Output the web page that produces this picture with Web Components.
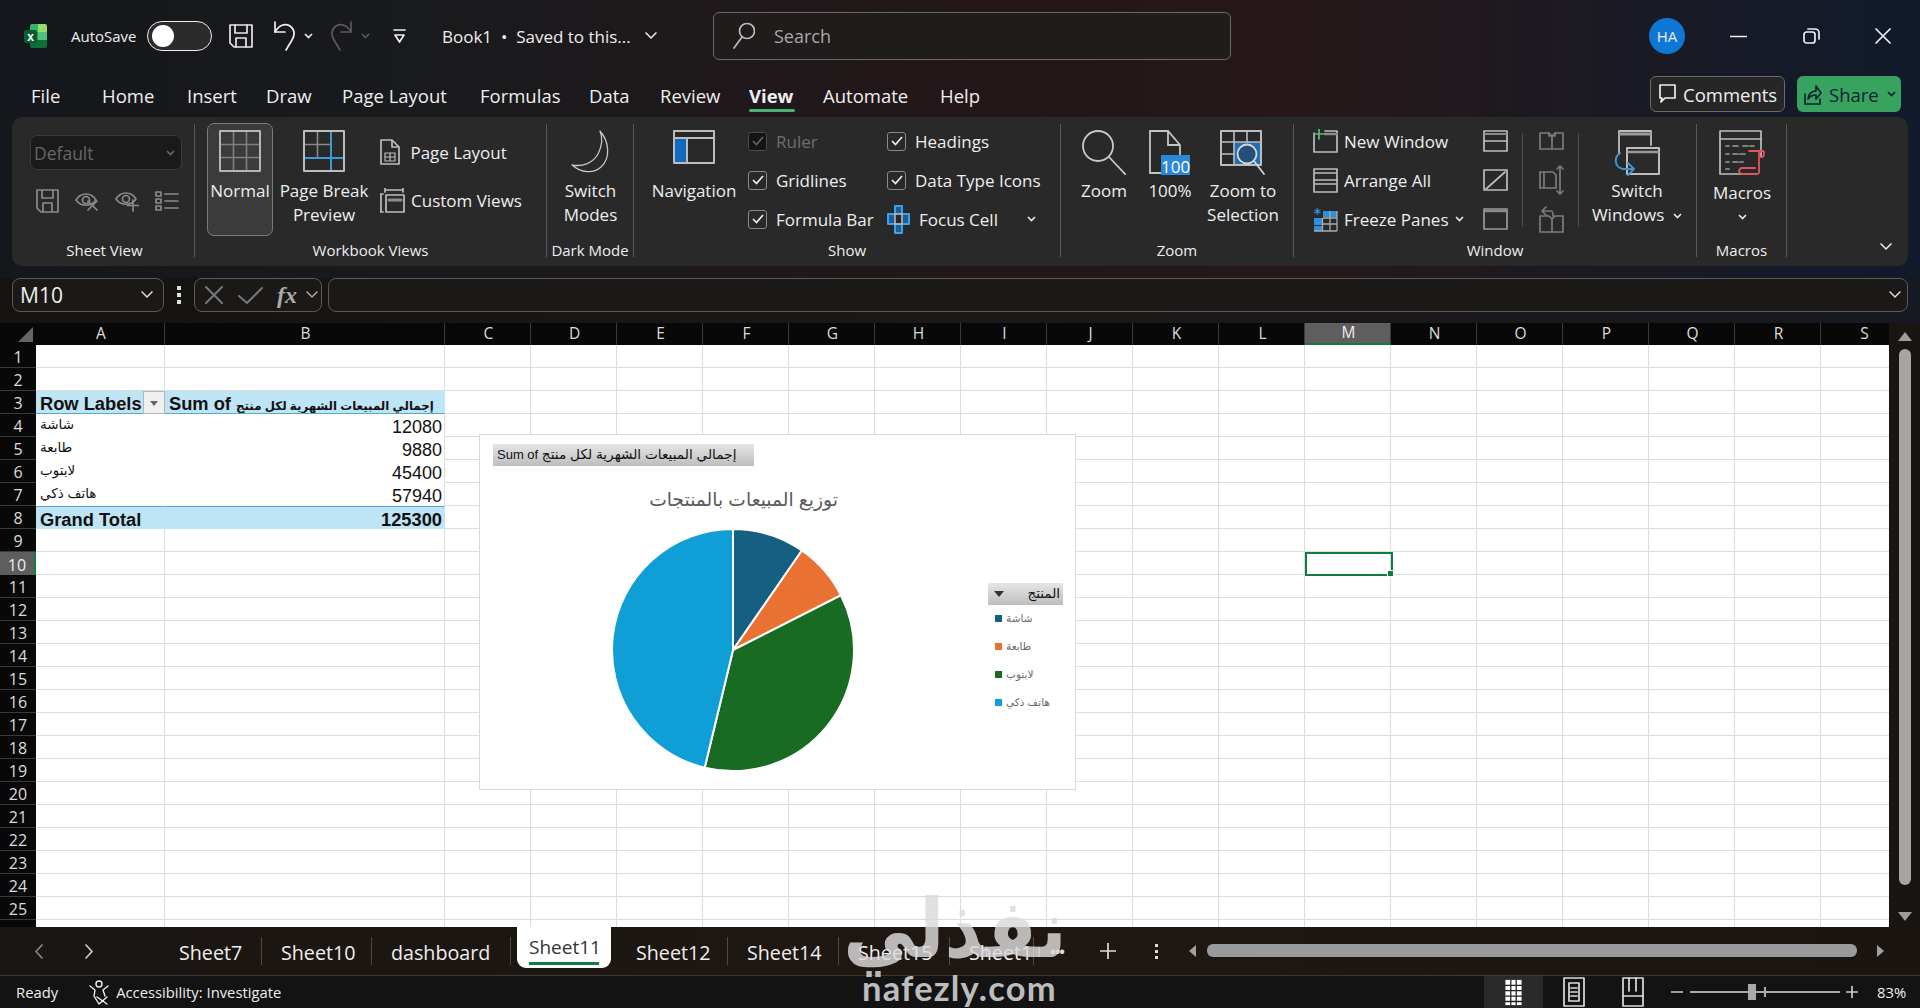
<!DOCTYPE html>
<html lang="en"><head><meta charset="utf-8"><title>Book1 - Excel</title>
<style>
html,body{margin:0;padding:0;width:1920px;height:1008px;overflow:hidden;background:#151515}
body{position:relative;display:flex;flex-direction:column;font-family:"Open Sans","Noto Sans",sans-serif;color:#eee}
</style></head><body>
<x-top></x-top>
<x-formula></x-formula>
<x-sheet>
  <x-chart></x-chart>
</x-sheet>
<x-sheettabs></x-sheettabs>
<x-status></x-status>
<x-watermark></x-watermark>
<script>
const FONT='"Open Sans","Noto Sans",sans-serif';
const G='#bdbdbd',BL='#2f8fd8';
const svg=(w,h,b,o='')=>{const m=o.match(/style="([^"]*)"/);return `<svg width="${w}" height="${h}" viewBox="0 0 ${w} ${h}" fill="none" stroke="${G}" stroke-width="1.7" stroke-linecap="round" stroke-linejoin="round" style="display:block;flex:none;${m?m[1]:''}">${b}</svg>`};
const chev=(c='#e6e6e6',w=9,sw=1.7)=>`<svg width="${w}" height="${w*6/9}" viewBox="0 0 9 6" fill="none" stroke="${c}" stroke-width="${sw*9/w}" style="display:block;flex:none"><path d="M1 1l3.5 3.5L8 1"/></svg>`;
const I={
excel:`<svg width="23" height="24" viewBox="0 0 23 24" style="display:block"><path d="M6 2a2 2 0 0 1 2-2h6v8H6z" fill="#33b36b"/><path d="M14 0h7a2 2 0 0 1 2 2v6h-9z" fill="#96dc6a"/><path d="M6 8h8v8H6z" fill="#1f9a57"/><path d="M14 8h9v8h-9z" fill="#4fc277"/><path d="M6 16h17v6a2 2 0 0 1-2 2H8a2 2 0 0 1-2-2z" fill="#0f6d3c"/><rect x="0" y="6" width="13" height="13" rx="2" fill="#0b5c33"/><text x="6.5" y="16.5" font-family="Liberation Sans,sans-serif" font-size="12" font-weight="700" fill="#fff" stroke="none" text-anchor="middle">x</text></svg>`,
save:(s='#e8e8e8')=>svg(24,24,`<path d="M1 1h22v22H5l-4-4z"/><path d="M6 1v8h12V1M7 23v-9h10v9"/>`,`style="stroke:${s}"`),
undo:svg(24,34,`<path d="M3 3v10h10"/><path d="M3 13C7 6 13 4 18 7c5 4 5 9 2 14l-6 10" />`,`style="stroke:#eee"`),
redo:svg(24,34,`<path d="M21 3v10H11"/><path d="M21 13C17 6 11 4 6 7c-5 4-5 9-2 14l6 10"/>`,`style="stroke:#5a5a5a"`),
cust:svg(13,15,`<path d="M1 1h11M2 6h9L6.5 13z" />`,`style="stroke:#eee"`),
search:svg(22,28,`<circle cx="14" cy="9" r="7.5"/><path d="M9 15L1 26"/>`,`style="stroke:#bbb"`),
min:svg(17,3,`<path d="M0 1.5h17"/>`,`style="stroke:#eee"`),
rest:svg(17,16,`<rect x="1" y="4" width="11" height="11" rx="2.5"/><path d="M5 1h7a4 4 0 0 1 4 4v6"/>`,`style="stroke:#eee"`),
close:svg(16,16,`<path d="M1 1l14 14M15 1L1 15"/>`,`style="stroke:#eee"`),
comment:svg(17,20,`<path d="M1 1h15v13H6l-4 4 1-4H1z"/>`,`style="stroke:#eee"`),
share:svg(18,22,`<path d="M1 11v10h15v-5M4 16c0-5 4-8 8-8V3l5 7-5 6v-4c-3 0-6 1-8 4z"/>`,`style="stroke:#123"`),
normal:svg(42,42,`<g stroke="#7f7f7f" stroke-width="1.6"><path d="M14.5 1v40M27.5 1v40M1 14.5h40M1 27.5h40"/></g><rect x="1" y="1" width="40" height="40" stroke="#b5b5b5" stroke-width="2"/>`),
pbreak:svg(42,42,`<g stroke="#8a8a8a" stroke-width="1.6"><path d="M14.5 1v27M1 14.5h27"/></g><path d="M28 1v40M1 28h40" stroke="#3c9ad8" stroke-width="2"/><rect x="1" y="1" width="40" height="40" stroke-width="2"/>`),
playout:svg(20,26,`<path d="M1 1h11l7 7v17H1zM12 1v7h7"/><path d="M5 14h10v8H5zM10 14v8M5 18h10" stroke-width="1.2"/>`),
cviews:svg(25,25,`<path d="M1 6v18M0 6h3M0 24h3M5 2h18M5 0v4M23 0v4"/><rect x="6" y="7" width="18" height="17"/><path d="M9 12h12" stroke="#8c8c8c" stroke-width="3"/>`),
moon:svg(41,44,`<path d="M30 1c9 10 11 27 1 36-8 7-20 6-29-2 11 2 21-2 26-11 4-8 5-16 2-23z"/>`,`style="stroke:#c6c6c6;stroke-width:1.3"`),
nav:svg(42,34,`<rect x="1" y="8" width="12" height="25" fill="#0f6cbd" stroke="none"/><rect x="1" y="1" width="40" height="32" stroke-width="2"/><path d="M1 8h40M14 8v25" stroke-width="2"/>`),
focus:svg(23,29,`<path d="M8 1h7v8h7v10h-7v9H8v-9H1V9h7z" fill="#1c5e94" stroke="#3ea0e6" stroke-width="2"/><path d="M8 9h7v10H8z" fill="#2a2a2a" stroke="#c8c8c8" stroke-width="1.4"/>`),
zoom:svg(44,45,`<circle cx="16" cy="16" r="15"/><path d="M27 27l17 18"/>`,`style="stroke:#c9c9c9;stroke-width:1.8"`),
p100:`<div style="position:relative;width:42px;height:46px"><svg width="32" height="44" viewBox="0 0 32 44" fill="none" stroke="#c4c4c4" stroke-width="1.8" style="display:block"><path d="M1 1h18l12 14v28H1zM19 1v14h12"/></svg><span style="position:absolute;left:12px;top:25px;width:29px;height:20px;background:#2a88d6;color:#fff;font:14px/20px ${FONT};letter-spacing:-.8px;text-align:center">100</span></div>`,
zsel:svg(46,46,`<rect x="14" y="12" width="26" height="22" fill="#1f6fb6" stroke="none"/><rect x="1" y="1" width="40" height="34" stroke-width="2"/><path d="M14 1v34M27 1v11M1 12h40M1 24h12" stroke-width="1.6"/><circle cx="27" cy="24" r="9.5" fill="#2a2a2a" fill-opacity=".45" stroke="#d8d8d8" stroke-width="1.8"/><path d="M34 31l10 13" stroke="#d8d8d8"/>`),
nwin:svg(25,24,`<path d="M1 4v19h23V2H12"/><path d="M12 5h12" stroke="#8a8a8a" stroke-width="2.4"/><path d="M6 0v10M1 5h10" stroke="#62bb73" stroke-width="1.7"/>`),
arr:svg(25,25,`<rect x="1" y="1" width="23" height="23"/><path d="M1 12h23M2 5h21" /><path d="M2 16h21" stroke-width="1.4"/>`),
frz:`<svg width="25" height="26" viewBox="0 0 25 26" fill="none" style="display:block"><path d="M10 5h14v6H10zM1 12h8v7H1z M1 20h8v5H1z" fill="${BL}"/><path d="M10 12h14M10 18h14M9.500 12v13M17 5v20M24 5v20M1 25h23" stroke="#aaa" stroke-width="1.3"/><text x="4.500" y="12" font-family="DejaVu Sans,sans-serif" font-size="14" font-weight="700" fill="${BL}" text-anchor="middle">*</text></svg>`,
split:svg(25,22,`<rect x="1" y="1" width="23" height="20"/><path d="M1 11h23"/><path d="M2 4h21" stroke-width="2" stroke="#8a8a8a"/>`),
hide:svg(25,22,`<rect x="1" y="1" width="23" height="20"/><path d="M3 20L22 3"/>`),
unh:svg(25,22,`<rect x="1" y="1" width="23" height="20" stroke="#9a9a9a"/><path d="M2 3h21" stroke="#8a8a8a" stroke-width="2.4"/>`),
bk1:svg(25,18,`<path d="M1 1h9l3 3v13H1zM13 4l3-3h8v16H13z" stroke="#7c7c7c"/><path d="M10 1v3h3M16 1v3h-3" stroke="#7c7c7c"/>`),
bk2:svg(25,30,`<path d="M5 7H1v16h4M5 7h9l3 3v13H5z" stroke="#7c7c7c"/><path d="M21 1v28M18 4l3-3 3 3M18 26l3 3 3-3" stroke="#7c7c7c"/>`),
bk3:svg(25,28,`<path d="M1 11h9l3 3v13H1zM13 14l3-3h8v16H13z" stroke="#7c7c7c"/><path d="M4 6h8c2 0 2 3 2 5M7 2L3 6l4 4" stroke="#7c7c7c"/>`),
swin:svg(46,46,`<path d="M5 24V1h32v14" stroke-width="1.8"/><path d="M6 4h30" stroke="#9a9a9a" stroke-width="3"/><rect x="13" y="18" width="32" height="26" fill="#2a2a2a" stroke-width="2"/><path d="M14 22h30" stroke="#9a9a9a" stroke-width="2.5"/><path d="M6 24C0 28 0 38 9 40h10M14 34l6 6-6 6" stroke="#3c93d6" stroke-width="2" transform="translate(0,-1)"/>`),
macro:svg(46,46,`<path d="M42 26V1H1v43h22"/><path d="M1 9h41" /><path d="M7 16h3M14 16h6M24 16h11M7 24h3M14 24h14M7 32h3M14 32h10M7 39h3" stroke="#9a9a9a" stroke-dasharray="5 2"/><path d="M25 44h13c3 0 2-4 2-4V24c0-3 2-3 4-3s1 6-1 6h-3M25 44c-2 0-5-1-5-3s2-3 3-3h13M30 21h14" stroke="#e0565a" stroke-width="1.8"/>`),
x:svg(18,18,`<path d="M1 1l16 16M17 1L1 17"/>`,`style="stroke:#777;stroke-width:2"`),
ok:svg(25,17,`<path d="M1 9l8 7L24 1"/>`,`style="stroke:#777;stroke-width:2"`),
acc:svg(23,25,`<circle cx="11" cy="4" r="3"/><path d="M2 6l5 4-1 6 5 8M20 6l-5 4 2 6M9 17l10 7M19 17l-8 7"/>`,`style="stroke:#eee;stroke-width:1.4"`),
sNorm:svg(20,30,`<rect x="1" y="1" width="18" height="28" fill="#fff" stroke="none"/><path d="M7 1v28M13 1v28M1 7h18M1 13h18M1 19h18M1 25h18" stroke="#222" stroke-width="1.4"/>`),
sLay:svg(22,30,`<rect x="1" y="1" width="20" height="28" stroke="#ddd"/><rect x="6" y="6" width="10" height="18" stroke="#ddd"/><path d="M8 11h6M8 15h6M8 19h6" stroke="#ddd"/>`),
sBrk:svg(22,30,`<rect x="1" y="1" width="20" height="28" stroke="#ddd"/><path d="M7 1v13M14 1v13M1 19h20" stroke="#ddd"/>`)
};
function def(name,css,html,init){customElements.define(name,class extends HTMLElement{constructor(){super();const r=this.attachShadow({mode:'open'});r.innerHTML=`<style>${css}</style>`+(typeof html==='function'?html(this):html);if(init)init(r,this)}})}

/* generic ribbon parts */
def('x-group',`:host{display:flex;flex-direction:column;box-sizing:border-box;margin-top:7px;height:133px;flex:none;border-right:1px solid #575757}
.c{flex:1;display:flex;min-height:0}.l{height:13px;line-height:13px;text-align:center;font-size:15px;color:#eee;white-space:nowrap}`,
`<div class="c"><slot></slot></div><div class="l" part="l"></div>`,(r,h)=>{const l=r.querySelector('.l');l.textContent=h.getAttribute('label');h.style.width=h.getAttribute('w')+'px';const p=h.getAttribute('lp');if(p)l.style.paddingLeft=p+'px'});

def('x-big',`:host{display:flex;flex-direction:column;align-items:center;flex:none;height:120px;font-size:17px;line-height:24px;color:#eee;text-align:center;white-space:nowrap}
.i{height:55px;box-sizing:border-box;padding-top:6px;display:flex;justify-content:center}`,
`<div class="i"></div><div><slot></slot></div>`,(r,h)=>{r.querySelector('.i').innerHTML=I[h.getAttribute('ic')];h.style.width=h.getAttribute('w')+'px';h.style.marginLeft=(h.getAttribute('ml')||0)+'px'});

def('x-item',`:host{display:flex;align-items:center;height:36px;font-size:17px;color:#eee;white-space:nowrap;flex:none}
.i{display:flex;align-items:center;margin-right:6px}.t{display:flex;align-items:center}`,
`<div class="i"></div><span class="t"><slot></slot></span>`,(r,h)=>{const i=r.querySelector('.i');i.innerHTML=I[h.getAttribute('ic')];const g=h.getAttribute('g');if(g)i.style.marginRight=g+'px'});

def('x-check',`:host{display:flex;align-items:center;height:36px;font-size:17px;color:#eee;white-space:nowrap;flex:none}
.b{width:17px;height:17px;border:1.700px solid #8a8a8a;border-radius:3px;margin-right:9px;display:flex;align-items:center;justify-content:center}
:host([off]){color:#6e6e6e}:host([off]) .b{background:#141414;border-color:#4a4a4a}`,
`<div class="b"><svg width="12" height="10" viewBox="0 0 12 10" fill="none" stroke="#eee" stroke-width="1.700"><path d="M1 5l3.500 3.500L11 1"/></svg></div><slot></slot>`,(r,h)=>{if(h.hasAttribute('off'))r.querySelector('svg').setAttribute('stroke','#666')});

def('x-col',`:host{display:flex;flex-direction:column;flex:none;gap:3px;margin-top:-1px}`,`<slot></slot>`,(r,h)=>{for(const k of ['gap','paddingTop','width','marginLeft']){const a=h.getAttribute(k);if(a)h.style[k]=a+'px'}});

/* top block: title bar + tab row + ribbon */
def('x-titlebar',`:host{display:flex;align-items:center;height:64px;box-sizing:border-box;padding-top:8px;flex:none;position:relative;font-size:15px;color:#eee}
.a{display:flex;align-items:center;flex:none}
.sw{width:65px;height:30px;box-sizing:border-box;border:1.500px solid #eee;border-radius:15px;background:#2b2b2b;display:flex;align-items:center;padding-left:4px;margin-left:7px}
.sw i{width:22px;height:22px;border-radius:50%;background:#fff}
.search{width:518px;height:48px;box-sizing:border-box;border:1px solid #6d6a68;border-radius:6px;background:#1f1c1b;display:flex;align-items:center;margin-left:55px;padding-left:19px;color:#a8a8a8;font-size:18px}
.search span{margin-left:19px}
.av{width:36px;height:36px;border-radius:50%;background:#0f78d4;color:#eee;font-size:15px;display:flex;align-items:center;justify-content:center;margin-left:418px}`,
`<div class="a" style="margin-left:24px">${I.excel}</div>
<div class="a" style="margin-left:24px;font-size:15px;width:77px">AutoSave</div>
<div class="sw" style="margin-left:-1px"><i></i></div>
<div class="a" style="margin-left:17px">${I.save()}</div>
<div class="a" style="margin-left:19px">${I.undo}</div>
<div class="a" style="margin-left:8px">${chev()}</div>
<div class="a" style="margin-left:17px">${I.redo}</div>
<div class="a" style="margin-left:7px">${chev('#5a5a5a')}</div>
<div class="a" style="margin-left:23px">${I.cust}</div>
<div class="a" style="margin-left:36px;font-size:17px;width:196px;white-space:nowrap">Book1 &nbsp;•&nbsp; Saved to this...</div>
<div class="a" style="margin-left:6px">${chev('#eee',14,1.500)}</div>
<div class="search">${I.search}<span>Search</span></div>
<div class="av">HA</div>
<div class="a" style="margin-left:45px">${I.min}</div>
<div class="a" style="margin-left:56px">${I.rest}</div>
<div class="a" style="margin-left:55px">${I.close}</div>`);

def('x-tabrow',`:host{display:flex;align-items:center;height:53px;flex:none;font-size:18.500px;color:#eee;padding-left:31px;position:relative}
span{flex:none;white-space:nowrap;position:relative;height:100%;display:flex;align-items:center;padding-top:9px;box-sizing:border-box}
b{position:absolute;left:0;width:46px;bottom:5px;height:3px;background:#4cb074;border-radius:2px}
.btn{position:absolute;top:12px;height:36px;box-sizing:border-box;border-radius:6px;display:flex;align-items:center;font-size:18.500px}`,
()=>{const t=[['File',71],['Home',85],['Insert',79],['Draw',76],['Page Layout',138],['Formulas',109],['Data',71],['Review',89],['View',74],['Automate',117],['Help',60]];
return t.map(([n,w])=>n=='View'?`<span style="width:${w}px;font-weight:700">${n}<b></b></span>`:`<span style="width:${w}px">${n}</span>`).join('')+
`<div class="btn" style="left:1650px;width:135px;border:1px solid #6a6a6a;background:#262626;padding-left:8px">${I.comment}<span style="margin-left:7px;padding:0">Comments</span></div>
<div class="btn" style="left:1797px;width:104px;background:#37a35f;padding-left:7px;color:#123">${I.share}<span style="margin-left:7px;padding:0">Share</span><span style="margin-left:8px;padding:0">${chev('#123')}</span></div>`});

def('x-ribbon',`:host{display:flex;box-sizing:border-box;width:1896px;height:149px;margin-left:12px;background:#292929;border-radius:10px;flex:none;font-family:${FONT};position:relative}
.sel{width:152px;height:35px;box-sizing:border-box;background:#1a1a1a;border:1px solid #3a3a3a;border-radius:7px;color:#666;font-size:17.500px;display:flex;align-items:center;justify-content:space-between;padding:0 6px 0 3px;margin-top:11px}
.ic{display:flex;gap:16px;margin:19px 0 0 6px;align-items:center}
.sep{width:1px;height:94px;margin-top:9px;background:#515151;flex:none}
.exp{position:absolute;left:1867px;top:125px}
.nm{width:66px;height:113px;margin:-1px 0 0 12px;box-sizing:border-box;border:1px solid #7a7a7a;border-radius:7px;background:#3b3b3b;display:flex;justify-content:center}
.g1{margin-left:18px}`,
`<x-group label="Sheet View" w="183" lp="3"><div class="g1"><div class="sel"><span>Default</span>${chev('#666')}</div>
<div class="ic">${svg(23,24,'<path d="M1 1h21v22H5l-4-4zM6 1v8h11V1M7 23v-9h9v9"/>','style="stroke:#8a8a8a"')}
${svg(24,20,'<path d="M1 9c5-8 15-8 20 0-5 7-15 7-20 0z"/><circle cx="11" cy="9" r="3.500"/><path d="M13 10l9 9M22 10l-9 9" />','style="stroke:#8a8a8a"')}
${svg(24,22,'<path d="M1 9c5-8 15-8 20 0-5 7-15 7-20 0z"/><circle cx="11" cy="9" r="3.500"/><path d="M18 10v11M12.500 15.500h11"/>','style="stroke:#8a8a8a"')}
${svg(24,21,'<rect x="1" y="1" width="5" height="4"/><rect x="1" y="8" width="5" height="4"/><rect x="1" y="15" width="5" height="4"/><path d="M10 3h13M10 10h13M10 17h13"/>','style="stroke:#8a8a8a"')}</div></div></x-group>
<x-group label="Workbook Views" w="352"><div class="nm"><x-big ic="normal" w="64">Normal</x-big></div>
<x-big ic="pbreak" w="100" ml="1">Page Break<br>Preview</x-big>
<x-col paddingTop="11" gap="12" marginLeft="6"><x-item ic="playout">&nbsp;Page Layout</x-item><x-item ic="cviews">Custom Views</x-item></x-col></x-group>
<x-group label="Dark Mode" w="87"><x-big ic="moon" w="87">Switch<br>Modes</x-big></x-group>
<x-group label="Show" w="427"><x-big ic="nav" w="104" ml="8">Navigation</x-big>
<x-col width="139" marginLeft="2"><x-check off>Ruler</x-check><x-check>Gridlines</x-check><x-check>Formula Bar</x-check></x-col>
<x-col width="170"><x-check>Headings</x-check><x-check>Data Type Icons</x-check><x-item ic="focus" g="9">Focus Cell<span style="margin-left:29px">${chev()}</span></x-item></x-col></x-group>
<x-group label="Zoom" w="233"><x-big ic="zoom" w="52" ml="17">Zoom</x-big><x-big ic="p100" w="54" ml="13">100%</x-big><x-big ic="zsel" w="92">Zoom to<br>Selection</x-big></x-group>
<x-group label="Window" w="403"><x-col width="170" marginLeft="19"><x-item ic="nwin">New Window</x-item><x-item ic="arr">Arrange All</x-item><x-item ic="frz">Freeze Panes<span style="margin-left:6px">${chev()}</span></x-item></x-col>
<x-col width="39"><x-item ic="split"></x-item><x-item ic="hide"></x-item><x-item ic="unh"></x-item></x-col>
<div class="sep"></div><x-col width="39" marginLeft="16"><x-item ic="bk1"></x-item><x-item ic="bk2"></x-item><x-item ic="bk3"></x-item></x-col>
<div class="sep"></div><x-big ic="swin" w="108" ml="4">Switch<br>Windows&nbsp;&nbsp;<span style="display:inline-block;vertical-align:middle">${chev()}</span></x-big></x-group>
<x-group label="Macros" w="90"><x-big ic="macro" w="90"><span style="line-height:28px">Macros</span><br><span style="display:inline-block;line-height:16px;vertical-align:top;padding-top:7px">${chev()}</span></x-big></x-group>
<div class="exp">${chev('#eee',14,1.500)}</div>`);

def('x-top',`:host{display:block;flex:none;height:278px;background:linear-gradient(90deg,#14171b 0,#191a1d 22%,#231719 50%,#261819 68%,#1a1a24 85%,#111a2b 100%)}`,
`<x-titlebar></x-titlebar><x-tabrow></x-tabrow><x-ribbon></x-ribbon>`);

/* formula bar */
def('x-formula',`:host{display:flex;flex:none;height:45px;box-sizing:border-box;padding-left:12px;background:linear-gradient(90deg,#14130f 0,#1d1715 50%,#171922 100%);margin-top:0;color:#eee}
.b{height:34px;box-sizing:border-box;border:1px solid #5c5a58;border-radius:8px;display:flex;align-items:center;flex:none;background:#1b1917}
.nm{width:152px;padding:0 9px 0 7px;justify-content:space-between;font:21px "Open Sans",sans-serif}
.dots{width:30px;display:flex;flex-direction:column;align-items:center;gap:3.500px;height:34px;justify-content:center;flex:none}
.dots i{width:3.500px;height:3.500px;background:#ddd}
.fx{width:128px;padding-left:10px}
.in{width:1580px;margin-left:6px;justify-content:flex-end;padding-right:5px}
em{font:italic 700 24px "Liberation Serif",serif;color:#aaa;margin-left:14px}`,
`<div class="b nm"><span>M10</span>${chev('#ddd',14,1.500)}</div><div class="dots"><i></i><i></i><i></i></div>
<div class="b fx">${I.x}<span style="margin-left:15px">${I.ok}</span><em>fx</em><span style="margin-left:8px">${chev('#aaa',14,1.500)}</span></div>
<div class="b in">${chev('#ddd',14,1.500)}</div>`);

/* sheet */
def('x-sheet',`:host{display:block;flex:none;height:604px;position:relative;overflow:hidden;background:#181512}
.g{display:grid;grid-template-columns:36px 129px 280px repeat(17,86px);grid-template-rows:22px repeat(26,23px);width:1889px;overflow:hidden;background:#fff;font-family:"Liberation Sans","DejaVu Sans",sans-serif;color:#111}
.h{background:#080808;color:#ddd;display:flex;align-items:center;justify-content:center;font:15.500px/1 "Open Sans",sans-serif;box-sizing:border-box}
.rh{border-bottom:1px solid #3a3a3a;font-size:16px;padding-top:2px}
.ch{border-right:1px solid #3a3a3a;padding-left:2px}
.sel{background:#5e5e5e;color:#eee;border-bottom:2px solid #107c41}
.rh.sel{border-bottom:0;border-right:2px solid #107c41}
.c{box-sizing:border-box;border-right:1px solid #dcdcdc;border-bottom:1px solid #dcdcdc;font-size:18px;line-height:26px;white-space:nowrap;padding:0 2px 0 4px;overflow:hidden}
.corner{position:relative}.corner:after{content:"";position:absolute;right:3px;bottom:3px;border:0 solid transparent;border-width:0 0 15px 15px;border-bottom-color:#666}
.n{border-right-color:#dcdcdc;border-bottom-color:transparent}
.p{background:#bfe4f5;font-weight:700;font-size:18.300px;border-right-color:#bfe4f5;border-bottom-color:#bfe4f5}
.t1{border-bottom:1px solid #53a9d2}.t2{border-top:1px solid #53a9d2;line-height:25px}
.a0{border-right-color:transparent}
.r{text-align:right}
.fb{position:absolute;left:143px;top:68px;width:22px;height:23px;box-sizing:border-box;background:#eef0f1;border:1px solid #b6b6b6;display:flex;align-items:center;justify-content:center}
.fb i{border:4px solid transparent;border-top:5px solid #666;margin-top:5px}
.cur{position:absolute;left:1305px;top:229px;width:88px;height:24px;box-sizing:border-box;border:2px solid #107c41}
.cur i{position:absolute;right:-3px;bottom:-3px;width:5px;height:5px;background:#107c41;border:1px solid #fff}
.v{position:absolute;left:1889px;top:0;width:31px;height:604px;background:#181512}
.up,.dn{position:absolute;left:9px;width:0;height:0;border:7px solid transparent}
.up{top:9px;border-bottom:9px solid #9d9d9d;border-top:0}
.dn{bottom:6px;border-top:9px solid #9d9d9d;border-bottom:0}
.th{position:absolute;left:10px;top:26px;width:12px;height:536px;border-radius:6px;background:#a5a5a5}
::slotted(*){position:absolute}`,
()=>{const cols='ABCDEFGHIJKLMNOPQRS'.split('');let s='<div class="g"><div class="h corner"></div>';
cols.forEach((c,i)=>s+=`<div class="h ch ${c=='M'?'sel':''}">${c}</div>`);
const L={4:'شاشة',5:'طابعة',6:'لابتوب',7:'هاتف ذكي'},V={4:12080,5:9880,6:45400,7:57940};
for(let r=1;r<=26;r++){s+=`<div class="h rh ${r==10?'sel':''}">${r<26?r:''}</div>`;
 cols.forEach((c,i)=>{
  if(i==0&&r==3)s+=`<div class="c p t1">Row Labels</div>`;
  else if(i==1&&r==3)s+=`<div class="c p t1" style="padding-left:4px">Sum of <span style="font-size:11.800px">إجمالي المبيعات الشهرية لكل منتج</span></div>`;
  else if(i==0&&r==8)s+=`<div class="c p t2">Grand Total</div>`;
  else if(i==1&&r==8)s+=`<div class="c p t2 r">125300</div>`;
  else if(i==0&&L[r])s+=`<div class="c n a0" style="font-size:13.500px;line-height:22px">${L[r]}</div>`;
  else if(i==1&&V[r])s+=`<div class="c n r">${V[r]}</div>`;
  else s+=`<div class="c"></div>`;
 })}
s+=`</div><div class="fb"><i></i></div><div class="cur"><i></i></div><div class="v"><div class="up"></div><div class="th"></div><div class="dn"></div></div><slot></slot>`;return s});

/* chart */
def('x-chart',`:host{display:block;position:absolute;left:479px;top:111px;width:597px;height:356px;box-sizing:border-box;background:#fff;border:1px solid #d9d9d9;font-family:"Liberation Sans","DejaVu Sans",sans-serif;color:#595959}
.fld{position:absolute;height:22px;background:linear-gradient(#e6e6e6,#bdbdbd);color:#111;font-size:13px;line-height:22px;white-space:nowrap;box-sizing:border-box}
.title{position:absolute;left:0;width:527px;top:52px;text-align:center;font-size:18.700px;line-height:26px;color:#595959}
svg{position:absolute;left:131px;top:93px}
.lg{position:absolute;left:515px;top:169px;font-size:10.500px;color:#6a6a6a}
.lg div{height:28px;display:flex;align-items:center;gap:4px}
.lg i{width:7px;height:7px;display:block}
.tri{position:absolute;left:6px;top:8px;border:5px solid transparent;border-top:6px solid #333;border-bottom:0}`,
()=>{const d=[[12080,'#156082','شاشة'],[9880,'#E97132','طابعة'],[45400,'#196B24','لابتوب'],[57940,'#0F9ED5','هاتف ذكي']],T=125300;let a=0,p='';
d.forEach(([v,c])=>{const b=a+v/T*2*Math.PI,x=(t)=>(122+121*Math.sin(t)).toFixed(2),y=(t)=>(122-121*Math.cos(t)).toFixed(2);
p+=`<path d="M122 122L${x(a)} ${y(a)}A121 121 0 ${b-a>Math.PI?1:0} 1 ${x(b)} ${y(b)}Z" fill="${c}" stroke="#fff" stroke-width="2"/>`;a=b});
return `<div class="fld" style="left:13px;top:9px;width:261px;padding-left:4px;">Sum of <span style="font-size:13.700px">إجمالي المبيعات الشهرية لكل منتج</span></div>
<div class="title">توزيع المبيعات بالمنتجات</div>
<svg width="244" height="244" viewBox="0 0 244 244">${p}</svg>
<div class="fld" style="left:508px;top:148px;width:75px;text-align:right;padding-right:3px;font-size:13.500px"><span class="tri"></span>المنتج</div>
<div class="lg">${d.map(([v,c,n])=>`<div><i style="background:${c}"></i>${n}</div>`).join('')}</div>`});

/* sheet tabs */
def('x-stab',`:host{display:flex;align-items:center;height:100%;box-sizing:border-box;padding:2px 0 0 19px;font-size:19.700px;color:#eee;flex:none;position:relative;white-space:nowrap}
:host(:not([active])):after{content:"";position:absolute;right:0;top:10px;height:28px;width:1px;background:#4d4843}
:host([active]){background:#fff;color:#333;height:41px;align-items:flex-start;padding:7px 12px 0;border-radius:0 0 9px 9px;margin:0 6px;font-size:19px}
:host([active]) u{display:block;position:absolute;left:12px;right:12px;top:35px;height:3px;background:#107c41}`,`<span><slot></slot></span><u></u>`);

def('x-sheettabs',`:host{display:flex;align-items:flex-start;flex:none;height:49px;box-sizing:border-box;border-bottom:1px solid #3c3733;background:linear-gradient(90deg,#1a1613,#1f1711 60%,#1a1510);position:relative;color:#ccc}
.tabs{display:flex;margin-left:160px;height:48px}
.nv{position:absolute;top:17px}
.ic{position:absolute}
.hs{position:absolute;left:1207px;top:17px;width:650px;height:13px;border-radius:6px;background:#9a9a9a}
.l,.r{position:absolute;top:18px;width:0;height:0;border:6px solid transparent}
.l{left:1189px;border-right:7px solid #a0a0a0;border-left:0}.r{left:1877px;border-left:7px solid #a0a0a0;border-right:0}`,
`<div class="nv" style="left:35px">${svg(8,15,'<path d="M7 1L1 7.500 7 14"/>','style="stroke:#888"')}</div>
<div class="nv" style="left:85px">${svg(8,15,'<path d="M1 1l6 6.500L1 14"/>','style="stroke:#ccc"')}</div>
<div class="tabs"><x-stab style="width:102px">Sheet7</x-stab><x-stab style="width:110px">Sheet10</x-stab><x-stab style="width:139px">dashboard</x-stab><x-stab active style="width:94px">Sheet11</x-stab><x-stab style="width:111px">Sheet12</x-stab><x-stab style="width:111px">Sheet14</x-stab><x-stab style="width:111px">Sheet15</x-stab><x-stab style="width:84px">Sheet1</x-stab></div>
<div class="ic" style="left:1050px;top:14px;font-size:15px;font-weight:700;letter-spacing:-1px;color:#ddd">•••</div>
<div class="ic" style="left:1100px;top:16px">${svg(16,16,'<path d="M8 0v16M0 8h16"/>','style="stroke:#ddd"')}</div>
<div class="ic" style="left:1155px;top:17px;display:flex;flex-direction:column;gap:3px">${'<i style="width:3px;height:3px;background:#ddd;display:block"></i>'.repeat(3)}</div>
<div class="l"></div><div class="hs"></div><div class="r"></div>`);

/* status */
def('x-status',`:host{display:flex;align-items:center;flex:none;height:32px;background:#131313;color:#eee;font-size:14.800px;position:relative}
.ab{position:absolute;top:0;height:32px;display:flex;align-items:center}
.hl{left:1484px;width:59px;background:#2a2a2a;justify-content:center}
.track{left:1690px;top:15px;width:150px;height:2px;background:#aaa}
.thumb{position:absolute;left:58px;top:-7px;width:8px;height:16px;background:#aaa}
.tick{position:absolute;left:74px;top:-4px;width:2px;height:10px;background:#aaa}`,
`<span style="margin-left:16px">Ready</span><span style="margin-left:30px;display:block">${I.acc}</span><span style="margin-left:5px">Accessibility: Investigate</span>
<div class="ab hl">${I.sNorm.replace('width="20" height="30"','width="19" height="27"')}</div>
<div class="ab" style="left:1563px">${I.sLay}</div><div class="ab" style="left:1622px">${I.sBrk}</div>
<div class="ab" style="left:1671px">${svg(12,2,'<path d="M0 1h12"/>','style="stroke:#ccc"')}</div>
<div class="ab track"><div class="thumb"></div><div class="tick"></div></div>
<div class="ab" style="left:1846px">${svg(12,12,'<path d="M6 0v12M0 6h12"/>','style="stroke:#ccc"')}</div>
<div class="ab" style="left:1877px">83%</div>`);

/* watermark */
def('x-watermark',`:host{position:absolute;left:850px;top:895px;width:225px;height:113px;pointer-events:none}
.a{position:absolute;left:-19px;top:-14px;width:222px;text-align:center;font:700 82px/96px "DejaVu Sans",sans-serif;color:rgba(218,218,218,.83);white-space:nowrap;transform:scaleX(.89)}
.b{position:absolute;left:12px;top:73px;font:700 34.500px/40px "Lato","Open Sans",sans-serif;letter-spacing:1.200px;color:#bdbdbd;white-space:nowrap}`,
`<div class="a">نفذلي</div><div class="b">nafezly.com</div>`);
</script>
</body></html>
